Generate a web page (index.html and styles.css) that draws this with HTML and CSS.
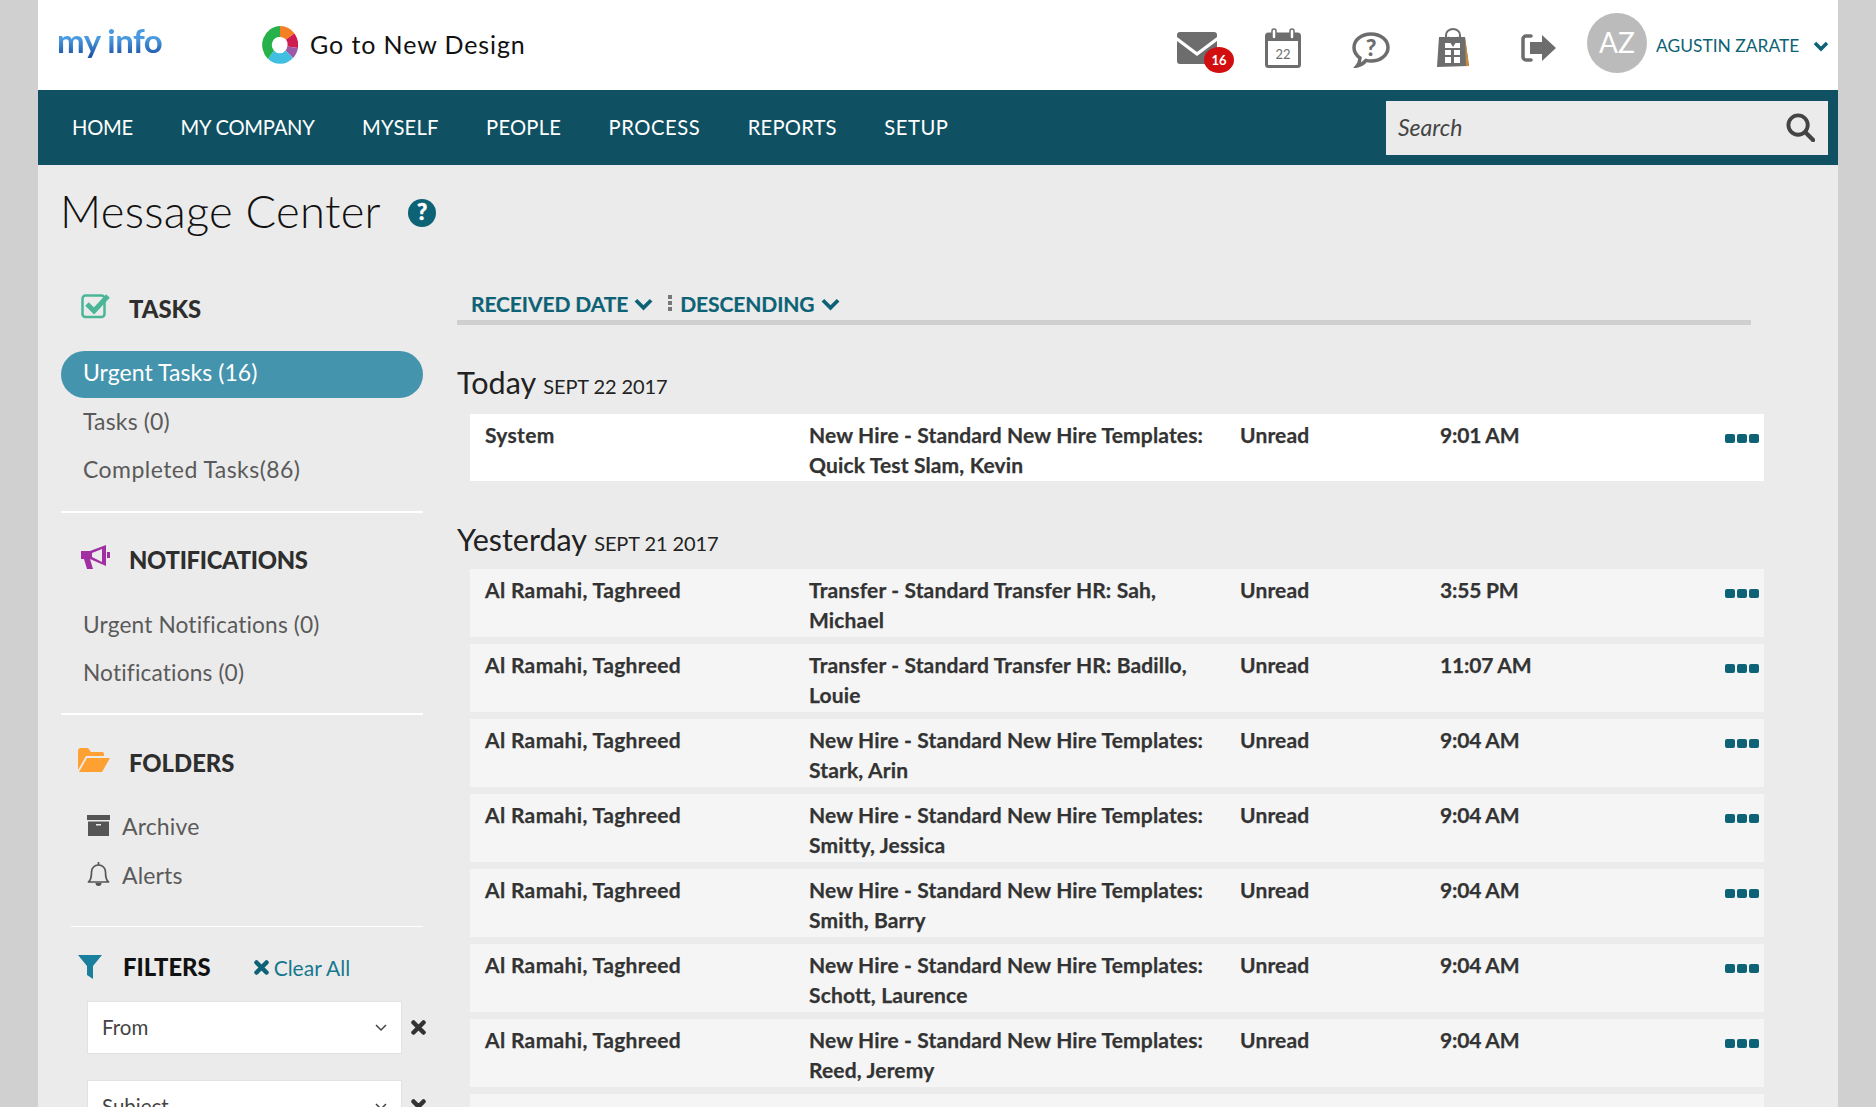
FILE: index.html
```html
<!DOCTYPE html>
<html lang="en">
<head>
<meta charset="utf-8">
<title>Message Center</title>
<link rel="stylesheet" href="styles.css">
</head>
<body>
<div class="app">
  <header class="top">
    <div class="logo">my info</div>
    <a class="newdesign">
      <svg class="donut" viewBox="0 0 36 38" width="36" height="38">
        <path d="M18 0A18 19 0 0 1 32.500 7.500L24 13.500A7.500 8 0 0 0 18 11Z" fill="#f47f24"/>
        <path d="M32.500 7.500A18 19 0 0 1 36 22L25.300 20.500A7.500 8 0 0 0 24 13.500Z" fill="#cf1b4f"/>
        <path d="M36 22A18 19 0 0 1 31 32L23.500 24.500A7.500 8 0 0 0 25.300 20.500Z" fill="#9b59a8"/>
        <path d="M31 32A18 19 0 0 1 6 33L12 24.500A7.500 8 0 0 0 23.500 24.500Z" fill="#41bfe0"/>
        <path d="M6 33A18 19 0 0 1 18 0V11A7.500 8 0 0 0 12 24.500Z" fill="#27b14b"/>
      </svg>
      <span>Go to New Design</span>
    </a>
    <div class="tools">
      <span class="tool tool-mail">
        <svg viewBox="0 0 40 32" width="40" height="32"><path d="M3 0H37A3 3 0 0 1 40 3V5L20 20L0 5V3A3 3 0 0 1 3 0Z" fill="#6d6d6d"/><path d="M0 9L20 24L40 9V29A3 3 0 0 1 37 32H3A3 3 0 0 1 0 29Z" fill="#6d6d6d"/></svg>
        <span class="badge">16</span>
      </span>
      <span class="tool tool-cal">
        <svg viewBox="0 0 36 40" width="36" height="40"><rect x="1.500" y="6" width="33" height="32.500" rx="2" fill="#fff" stroke="#6d6d6d" stroke-width="3"/><rect x="1" y="6" width="34" height="7" fill="#6d6d6d"/><rect x="7" y="1" width="4" height="10" rx="2" fill="#fff" stroke="#6d6d6d" stroke-width="1.500"/><rect x="25" y="1" width="4" height="10" rx="2" fill="#fff" stroke="#6d6d6d" stroke-width="1.500"/><text x="18" y="31" text-anchor="middle" class="cal-num">22</text></svg>
      </span>
      <span class="tool tool-talk">
        <svg viewBox="0 0 38 36" width="38" height="36"><path d="M19 2C28.500 2 36 8 36 15.500S28.500 29 19 29C17 29 15.500 28.800 14 28.400C12 31 9.500 33 5 34C7 31.500 8 29 8 26C4.500 23.500 2 20 2 15.500C2 8 9.500 2 19 2Z" fill="#fff" stroke="#6d6d6d" stroke-width="3.500"/><text x="19" y="23.500" text-anchor="middle" class="talk-q">?</text></svg>
      </span>
      <span class="tool tool-bag">
        <svg viewBox="0 0 34 40" width="34" height="40"><path d="M10 11V7A7 6 0 0 1 24 7V11" fill="none" stroke="#6d6d6d" stroke-width="2"/><path d="M3 9H29L33 38L1 39Z" fill="#6d6d6d"/><path d="M29 9L33 38L30 38Z" fill="#c98a3c"/><rect x="9" y="15" width="15" height="5" fill="#fff"/><rect x="9" y="22" width="6" height="5" fill="#fff"/><rect x="18" y="22" width="6" height="5" fill="#fff"/><rect x="9" y="29" width="6" height="6" fill="#fff"/><rect x="18" y="29" width="6" height="6" fill="#fff"/><path d="M12 9L17 17L22 9" fill="none" stroke="#6d6d6d" stroke-width="2"/></svg>
      </span>
      <span class="tool tool-out">
        <svg viewBox="0 0 36 28" width="36" height="28"><path d="M10 2H5A3 3 0 0 0 2 5V23A3 3 0 0 0 5 26H10" fill="none" stroke="#6d6d6d" stroke-width="3.500" stroke-linecap="round"/><path d="M9 8H21V1L35 14L21 27V20H9Z" fill="#6d6d6d"/></svg>
      </span>
      <span class="avatar">AZ</span>
      <span class="username">AGUSTIN ZARATE</span>
      <svg class="usercaret" viewBox="0 0 16 11" width="16" height="11"><path d="M2 2L8 8L14 2" fill="none" stroke="#0d6275" stroke-width="3.500"/></svg>
    </div>
  </header>

  <nav class="nav">
    <a class="tight">HOME</a><a class="tight">MY COMPANY</a><a class="mid">MYSELF</a><a class="mid">PEOPLE</a><a class="wide">PROCESS</a><a class="mid">REPORTS</a><a class="wide">SETUP</a>
    <div class="search">
      <span>Search</span>
      <svg viewBox="0 0 30 30" width="29" height="29"><circle cx="12.500" cy="12.500" r="10" fill="none" stroke="#444" stroke-width="4"/><path d="M20 20L28 28" stroke="#444" stroke-width="4.500" stroke-linecap="round"/></svg>
    </div>
  </nav>

  <div class="titlebar">
    <h1>Message Center</h1>
    <svg class="help" viewBox="0 0 28 28" width="28" height="28"><circle cx="14" cy="14" r="14" fill="#0d6275"/><text x="14" y="21" text-anchor="middle" class="help-q">?</text></svg>
  </div>

  <div class="columns">
    <aside class="side">
      <section class="group group-tasks">
        <div class="grouphead">
          <svg class="gicon" viewBox="0 0 30 26" width="30" height="26"><rect x="1.500" y="2.500" width="22" height="21.500" rx="3" fill="none" stroke="#49b698" stroke-width="2.500"/><path d="M6 11L13 18L27 3" fill="none" stroke="#49b698" stroke-width="5"/></svg>
          <h2>TASKS</h2>
        </div>
        <a class="item active">Urgent Tasks (16)</a>
        <a class="item">Tasks (0)</a>
        <a class="item item-wide">Completed Tasks(86)</a>
      </section>
      <section class="group group-notes">
        <div class="grouphead">
          <svg class="gicon" viewBox="0 0 30 26" width="30" height="26"><path d="M1 7H10L26 1V22L10 15V15L13 25H7L4 15H1Z" fill="#a12ea3"/><path d="M22 5V18L12 13V9Z" fill="#ebebeb"/><rect x="27" y="8" width="3" height="6" fill="#a12ea3"/></svg>
          <h2>NOTIFICATIONS</h2>
        </div>
        <a class="item">Urgent Notifications (0)</a>
        <a class="item">Notifications (0)</a>
      </section>
      <section class="group group-folders">
        <div class="grouphead">
          <svg class="gicon" viewBox="0 0 32 24" width="32" height="24"><path d="M0 22V3A3 3 0 0 1 3 0H10L13 4H24A2 2 0 0 1 26 6V8H8Z" fill="#ffa033"/><path d="M9 10H32L24 24H1Z" fill="#ffa033"/></svg>
          <h2>FOLDERS</h2>
        </div>
        <a class="item item-icon">
          <svg viewBox="0 0 23 21" width="23" height="21"><rect width="23" height="5" fill="#555"/><path d="M1 6.500H22V21H1Z" fill="#555"/><rect x="9" y="9" width="5" height="1.500" fill="#ebebeb"/></svg>
          Archive
        </a>
        <a class="item item-icon">
          <svg viewBox="0 0 23 25" width="23" height="25"><path d="M1.500 20C4 18 4.500 15 4.500 10C4.500 6 7.500 3 11.500 3S18.500 6 18.500 10C18.500 15 19 18 21.500 20Z" fill="none" stroke="#555" stroke-width="1.700" stroke-linejoin="round"/><path d="M11.500 0V3" stroke="#555" stroke-width="1.700"/><path d="M8.500 21A3 3 0 0 0 14.500 21Z" fill="#555"/></svg>
          Alerts
        </a>
      </section>
      <section class="filters">
        <div class="filterhead">
          <svg viewBox="0 0 24 24" width="24" height="24"><path d="M0 0H24L15 11V24L9 20V11Z" fill="#1a7f9c"/></svg>
          <h2>FILTERS</h2>
          <a class="clear"><svg class="xmark" viewBox="0 0 15 15" width="15" height="15"><path d="M2.500 2.500L12.500 12.500M12.500 2.500L2.500 12.500" stroke="#0d6275" stroke-width="4.500" stroke-linecap="round"/></svg>Clear All</a>
        </div>
        <div class="filter">
          <div class="select"><span>From</span><svg viewBox="0 0 12 8" width="12" height="8"><path d="M1 1L6 6L11 1" fill="none" stroke="#444" stroke-width="1.500"/></svg></div>
          <svg class="xmark" viewBox="0 0 15 15" width="15" height="15"><path d="M2.500 2.500L12.500 12.500M12.500 2.500L2.500 12.500" stroke="#333" stroke-width="4.500" stroke-linecap="round"/></svg>
        </div>
        <div class="filter">
          <div class="select"><span>Subject</span><svg viewBox="0 0 12 8" width="12" height="8"><path d="M1 1L6 6L11 1" fill="none" stroke="#444" stroke-width="1.500"/></svg></div>
          <svg class="xmark" viewBox="0 0 15 15" width="15" height="15"><path d="M2.500 2.500L12.500 12.500M12.500 2.500L2.500 12.500" stroke="#333" stroke-width="4.500" stroke-linecap="round"/></svg>
        </div>
      </section>
    </aside>

    <main class="main">
      <div class="sortbar">
        <a class="sort">RECEIVED DATE<svg viewBox="0 0 20 13" width="19" height="13"><path d="M2 2L10 10L18 2" fill="none" stroke="#0d6275" stroke-width="4"/></svg></a>
        <span class="vdots"><i></i><i></i><i></i></span>
        <a class="sort">DESCENDING<svg viewBox="0 0 20 13" width="19" height="13"><path d="M2 2L10 10L18 2" fill="none" stroke="#0d6275" stroke-width="4"/></svg></a>
      </div>

      <h3 class="day day-first">Today <small>SEPT 22 2017</small></h3>
      <div class="row row-new">
        <div class="from">System</div><div>New Hire - Standard New Hire Templates:<br>Quick Test Slam, Kevin</div><div>Unread</div><div class="time">9:01 AM</div><div class="dots"><i></i><i></i><i></i></div>
      </div>

      <h3 class="day day-next">Yesterday <small>SEPT 21 2017</small></h3>
      <div class="row">
        <div class="from">Al Ramahi, Taghreed</div><div>Transfer - Standard Transfer HR: Sah,<br>Michael</div><div>Unread</div><div class="time">3:55 PM</div><div class="dots"><i></i><i></i><i></i></div>
      </div>
      <div class="row">
        <div class="from">Al Ramahi, Taghreed</div><div>Transfer - Standard Transfer HR: Badillo,<br>Louie</div><div>Unread</div><div class="time">11:07 AM</div><div class="dots"><i></i><i></i><i></i></div>
      </div>
      <div class="row">
        <div class="from">Al Ramahi, Taghreed</div><div>New Hire - Standard New Hire Templates:<br>Stark, Arin</div><div>Unread</div><div class="time">9:04 AM</div><div class="dots"><i></i><i></i><i></i></div>
      </div>
      <div class="row">
        <div class="from">Al Ramahi, Taghreed</div><div>New Hire - Standard New Hire Templates:<br>Smitty, Jessica</div><div>Unread</div><div class="time">9:04 AM</div><div class="dots"><i></i><i></i><i></i></div>
      </div>
      <div class="row">
        <div class="from">Al Ramahi, Taghreed</div><div>New Hire - Standard New Hire Templates:<br>Smith, Barry</div><div>Unread</div><div class="time">9:04 AM</div><div class="dots"><i></i><i></i><i></i></div>
      </div>
      <div class="row">
        <div class="from">Al Ramahi, Taghreed</div><div>New Hire - Standard New Hire Templates:<br>Schott, Laurence</div><div>Unread</div><div class="time">9:04 AM</div><div class="dots"><i></i><i></i><i></i></div>
      </div>
      <div class="row">
        <div class="from">Al Ramahi, Taghreed</div><div>New Hire - Standard New Hire Templates:<br>Reed, Jeremy</div><div>Unread</div><div class="time">9:04 AM</div><div class="dots"><i></i><i></i><i></i></div>
      </div>
      <div class="row"></div>
    </main>
  </div>
</div>
</body>
</html>
```
FILE: styles.css
```css
* { box-sizing: border-box; }
html, body { margin: 0; height: 100%; overflow: hidden; }
body { background: #d0d0d0; font-family: Lato, "Open Sans", sans-serif; color: #333; }
.app { width: 1800px; height: 1107px; margin: 0 38px; background: #ebebeb; overflow: hidden; }

.top { height: 90px; background: #fff; display: flex; align-items: center; padding-left: 19px; }
.logo { width: 205px; font: 700 33px/1 "Lato", sans-serif; letter-spacing: -0.5px; background: linear-gradient(#4a9ae0 35%, #1f55a6 75%); -webkit-background-clip: text; background-clip: text; color: transparent; padding-bottom: 9px; }
.newdesign { display: flex; align-items: center; gap: 12px; font-size: 25px; color: #111; width: 400px; letter-spacing: .9px; }
.newdesign span { padding-bottom: 2px; }
.tools { display: flex; align-items: center; flex: 1; position: relative; height: 90px; }
.tool { display: block; position: absolute; line-height: 0; }
.tool-mail { left: 515px; top: 32px; }
.tool-cal { left: 603px; top: 28px; }
.tool-talk { left: 690px; top: 32px; }
.tool-bag { left: 774px; top: 28px; }
.tool-out { left: 859px; top: 34px; }
.badge { position: absolute; left: 27px; top: 15px; width: 30px; height: 26px; border-radius: 50%; background: #d20f10; color: #fff; font: 700 13px/26px Lato, sans-serif; text-align: center; }
.cal-num { font: 400 13px Lato, sans-serif; fill: #6d6d6d; }
.talk-q { font: 900 23px Lato, sans-serif; fill: #6d6d6d; }
.avatar { position: absolute; left: 925px; top: 13px; width: 60px; height: 60px; border-radius: 50%; background: #bbb; color: #fff; font-size: 28px; line-height: 58px; text-align: center; }
.username { position: absolute; left: 994px; top: 35px; color: #0d6275; font-size: 17.400px; line-height: 22px; white-space: nowrap; }
.usercaret { position: absolute; left: 1151px; top: 41px; }

.nav { height: 75px; background: #0f5163; display: flex; align-items: center; padding: 0 10px 0 34px; gap: 47.500px; }
.nav a { color: #fff; font-size: 20.200px; padding-bottom: 2px; }
.nav .tight { letter-spacing: -.25px; }
.nav .mid { letter-spacing: .2px; }
.nav .wide { letter-spacing: .55px; }
.search { margin-left: auto; width: 442px; height: 54px; background: #ebebeb; display: flex; align-items: center; justify-content: space-between; padding: 0 13px 0 12px; font-size: 23px; font-style: italic; color: #444; }
.search span { padding-bottom: 2px; }

.titlebar { display: flex; align-items: center; gap: 27px; height: 94px; padding-left: 22px; }
.titlebar h1 { padding-bottom: 4px; }
.help { margin-top: 2px; }
h1 { margin: 0; font-weight: 300; font-size: 45.300px; color: #111; letter-spacing: .3px; }

.columns { display: flex; }
.side { width: 419px; padding-left: 23px; flex: none; }
.group { width: 362px; }
.grouphead { display: grid; grid-template-columns: 48px 1fr; align-items: center; height: 34px; padding-left: 20px; }
.gicon { margin-bottom: 6px; }
.group-notes .gicon { margin-left: -1px; }
.group-folders .gicon { margin-left: -3px; }
h2 { margin: 0; font-size: 23.800px; font-weight: 900; color: #2e2e2e; }
.group-notes h2 { letter-spacing: -.3px; }
.group-tasks { padding-top: 33px; height: 254px; border-bottom: 2px solid #fff; }
.group-notes { padding-top: 30px; height: 202px; border-bottom: 2px solid #fff; }
.group-folders { padding-top: 31px; height: 211px; }
.group-tasks .grouphead + .item { margin-top: 25px; }
.group-notes .grouphead + .item { margin-top: 23px; }
.group-folders .grouphead + .item { margin-top: 21px; }
.item { display: flex; align-items: center; height: 48px; padding-left: 22px; font-size: 23px; letter-spacing: .15px; color: #5a5a5a; border-radius: 24px; }
.group-notes .item { font-size: 22.700px; }
.item-wide { letter-spacing: .45px; }
.item.active { background: #4494ad; color: #fff; margin-bottom: -1px; height: 47px; padding-bottom: 5px; letter-spacing: .05px; }
.item-icon { gap: 12px; padding-left: 26px; height: 49px; }
.item-icon svg { flex: none; }

.filters { margin-left: 10px; width: 352px; border-top: 1px solid #fff; padding-top: 24px; }
.filterhead { display: flex; align-items: center; height: 32px; padding-left: 7px; }
.filterhead svg { flex: none; }
.filterhead h2 { margin-left: 21px; color: #111; }
.clear { margin-left: 43px; display: flex; align-items: center; gap: 5px; color: #16788f; font-size: 21px; }
.filter { display: flex; align-items: center; gap: 9px; margin: 18px 0 0 16px; }
.filter + .filter { margin-top: 26px; }
.select { flex: none; width: 315px; height: 53px; background: #fff; border: 1px solid #e2e2e2; display: flex; align-items: center; justify-content: space-between; padding: 0 14px 0 14px; font-size: 20.500px; color: #444; }
.select span { padding-bottom: 2px; }
.xmark { flex: none; }

.main { width: 1307px; }
.sortbar { height: 66px; width: 1294px; border-bottom: 5px solid #cfcfcf; display: flex; align-items: flex-end; padding: 0 0 3px 14px; color: #0d6275; }
.sort { display: flex; align-items: center; gap: 6px; font-size: 21px; letter-spacing: -.1px; font-weight: 700; color: #0d6275; line-height: 26px; -webkit-text-stroke: .2px #0d6275; }
.vdots { display: flex; flex-direction: column; gap: 2px; margin: 0 8px 6px 15px; }
.vdots i { display: block; width: 4px; height: 4px; background: #777; }
.day { margin: 0; font-weight: 400; font-size: 30.500px; color: #222; line-height: 40px; }
.day small { font-size: 20px; font-weight: 400; line-height: 1; letter-spacing: -.1px; }
.day-first { margin-top: 37px; margin-bottom: 12px; }
.day-next { margin-top: 38px; margin-bottom: 10px; }
.row { margin-left: 13px; height: 68px; background: #f5f5f5; margin-bottom: 7px; display: grid; grid-template-columns: 324px 431px 200px 285px 1fr; padding-left: 15px; font-size: 21px; letter-spacing: .15px; font-weight: 700; line-height: 30px; padding-top: 6px; color: #333; -webkit-text-stroke: .25px #333; }
.row-new { background: #fff; height: 67px; }
.from { letter-spacing: .35px; }
.time { letter-spacing: -.2px; }
.dots { display: flex; gap: 2px; padding-top: 14px; height: 24px; }
.dots i { display: block; width: 10px; height: 9px; background: #0d6275; border-radius: 2px; }
.help-q { font: 900 22px Lato, sans-serif; fill: #fff; stroke: #fff; stroke-width: .5px; }
```
